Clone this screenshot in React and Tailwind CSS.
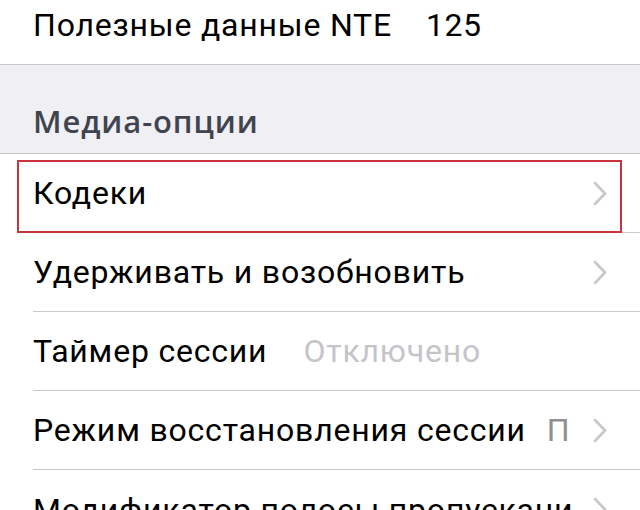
const font = { fontFamily: "Roboto, 'Liberation Sans', sans-serif" };
const headFont = { fontFamily: "'Open Sans', Roboto, sans-serif" };

function Chevron() {
  return (
    <svg width="14" height="25" viewBox="0 0 14 25" className="shrink-0 ml-[20px]">
      <polyline points="2,2 12,12.5 2,23" fill="none" stroke="#c7c7cc" strokeWidth="2.6" strokeLinecap="round" strokeLinejoin="round" />
    </svg>
  );
}

function Row({ label, value, valueClass = "text-[#c4c4c9] ml-[36px]", chevron, highlight, last }) {
  return (
    <div className="relative pl-[33px] bg-white">
      <div className={"h-[79px] flex items-center pr-[33px] " + (last ? "" : "border-b border-[#c8c7cc]")}>
        <span className="min-w-0 overflow-hidden text-[32px] tracking-[0.8px] text-black whitespace-nowrap">{label}</span>
        {value && <span className={"shrink-0 text-[32px] tracking-[0.8px] whitespace-nowrap " + valueClass}>{value}</span>}
        <div className="flex-1" />
        {chevron && <Chevron />}
      </div>
      {highlight && (
        <div className="absolute left-[17px] right-[18px] top-[6px] bottom-[0px] border-2 border-[#c8333c] pointer-events-none" />
      )}
    </div>
  );
}

export default function App() {
  return (
    <div className="w-[640px] h-[510px] overflow-hidden bg-white" style={font}>
      <div className="h-[65px] flex items-center pl-[33px] pb-[14px] border-b border-[#c8c7cc]">
        <span className="text-[32px] tracking-[0.8px] text-black">Полезные данные NTE</span>
        <span className="ml-[34px] text-[32px] tracking-[0.5px] text-black">125</span>
      </div>

      <div className="h-[89px] bg-[#efeff4] border-b border-[#c8c7cc] flex items-end pl-[33px] pb-[9px]">
        <span className="text-[31px] tracking-[0.9px] font-semibold text-[#40444f]" style={headFont}>Медиа-опции</span>
      </div>

      <Row label="Кодеки" chevron highlight />
      <Row label="Удерживать и возобновить" chevron />
      <Row label="Таймер сессии" value="Отключено" />
      <Row label="Режим восстановления сессии" value="П" valueClass="text-[#8e8e93] ml-[21px]" chevron />
      <Row label="Модификатор полосы пропускания" chevron last />
    </div>
  );
}
